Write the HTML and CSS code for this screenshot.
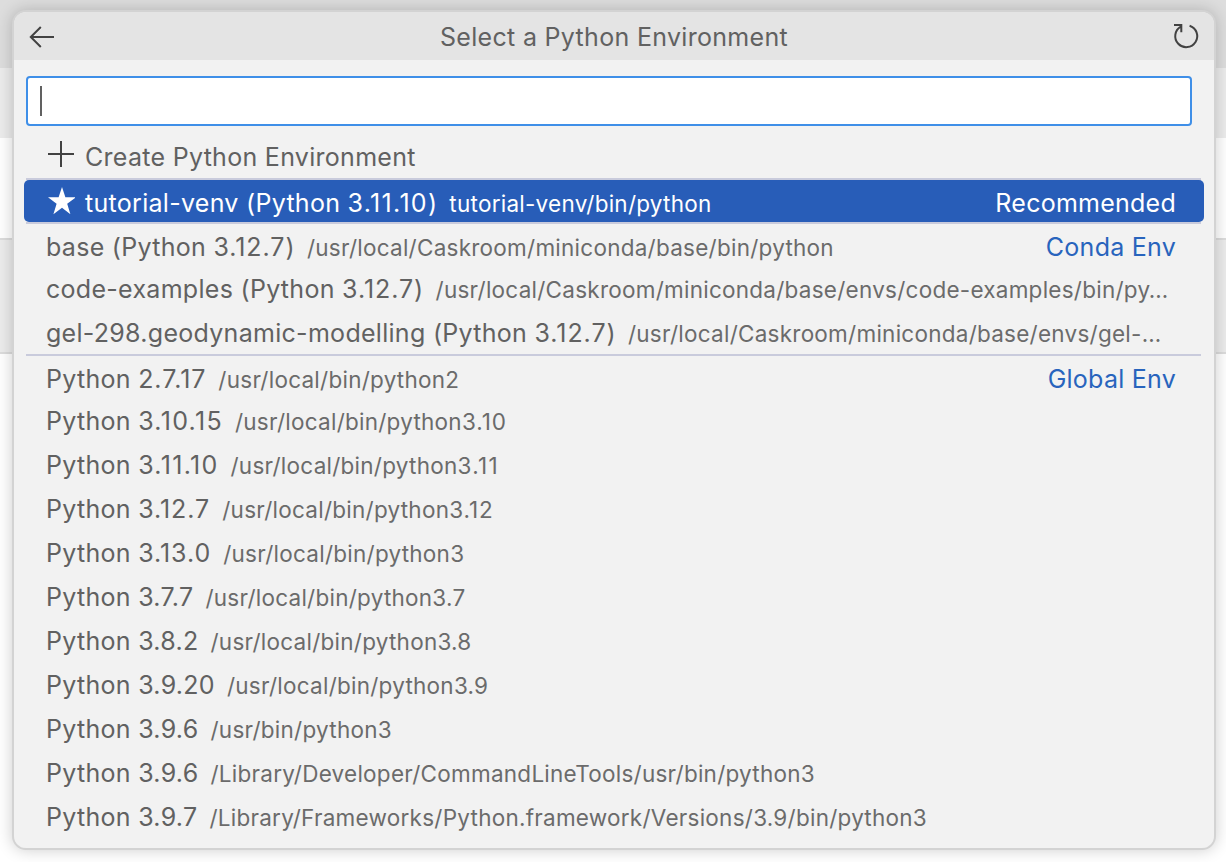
FILE: index.html
```html
<!DOCTYPE html>
<html lang="en">
<head>
<meta charset="utf-8">
<title>Select a Python Environment</title>
<link rel="stylesheet" href="styles.css">
</head>
<body>
<div class="backdrop">
  <div class="band band-title"></div>
  <div class="band band-tabs"></div>
  <div class="band band-editor"></div>
  <div class="band band-cell"></div>
</div>
<main class="quick-pick">
  <header class="titlebar">
    <svg class="icon back" viewBox="0 0 28 26"><path d="M26 13H3M12.8 3 2.8 13l10 10" /></svg>
    <h1 class="title">Select a Python Environment</h1>
    <svg class="icon refresh" viewBox="0 0 28 28"><path d="M17.6 2.7A11 11 0 1 1 8.8 3.6M2 2h7.3v7.2" /></svg>
  </header>
  <div class="input"><span class="caret"></span></div>
  <ul class="list">
    <li class="row"><svg class="icon lead" viewBox="0 0 28 28"><path d="M14 1v26M1 14h26" /></svg><span class="label create">Create Python Environment</span></li>
    <li class="row group selected"><svg class="icon lead star" viewBox="0 0 28 28"><path d="M15 0l3.4 10.3H28.8l-8.6 6.5 3.2 10.4L15 20.8l-8.6 6.4 3.2-10.4L1 10.3h10.6z" /></svg><span class="label">tutorial-venv (Python <span class="wider">3.11.10</span>)</span><span class="path">tutorial-venv/bin/python</span><span class="tag">Recommended</span></li>
    <li class="row group"><span class="label">base (Python <span class="wide">3.12.7</span>)</span><span class="path">/usr/local/Caskroom/miniconda/base/bin/python</span><span class="tag">Conda Env</span></li>
    <li class="row"><span class="label">code-examples (Python <span class="wide">3.12.7</span>)</span><span class="path">/usr/local/Caskroom/miniconda/base/envs/code-examples/bin/py…</span></li>
    <li class="row"><span class="label">gel-298.geodynamic-modelling (Python <span class="wide">3.12.7</span>)</span><span class="path">/usr/local/Caskroom/miniconda/base/envs/gel-…</span></li>
    <li class="row group"><span class="label">Python <span class="wide">2.7.17</span></span><span class="path">/usr/local/bin/python2</span><span class="tag">Global Env</span></li>
    <li class="row"><span class="label">Python <span class="wider">3.10.15</span></span><span class="path">/usr/local/bin/python<span class="wide">3.10</span></span></li>
    <li class="row"><span class="label">Python <span class="wider">3.11.10</span></span><span class="path">/usr/local/bin/python<span class="wider">3.11</span></span></li>
    <li class="row"><span class="label">Python <span class="wide">3.12.7</span></span><span class="path">/usr/local/bin/python<span class="wide">3.12</span></span></li>
    <li class="row"><span class="label">Python <span class="wide">3.13.0</span></span><span class="path">/usr/local/bin/python3</span></li>
    <li class="row"><span class="label">Python 3.7.7</span><span class="path">/usr/local/bin/python3.7</span></li>
    <li class="row"><span class="label">Python 3.8.2</span><span class="path">/usr/local/bin/python3.8</span></li>
    <li class="row"><span class="label">Python 3.9.20</span><span class="path">/usr/local/bin/python3.9</span></li>
    <li class="row"><span class="label">Python 3.9.6</span><span class="path">/usr/bin/python3</span></li>
    <li class="row"><span class="label">Python 3.9.6</span><span class="path">/Library/Developer/CommandLineTools/usr/bin/python3</span></li>
    <li class="row"><span class="label">Python 3.9.7</span><span class="path">/Library/Frameworks/Python.framework/Versions/3.9/bin/python3</span></li>
  </ul>
</main>
</body>
</html>
```

FILE: styles.css
```css
* { box-sizing: border-box; }
body {
  margin: 0;
  height: 862px;
  padding: 10px 10px 12px 12px;
  overflow: hidden;
  background: #fff;
  color: #616161;
  font-family: Inter, "Liberation Sans", sans-serif;
  font-size: 25px;
}
.backdrop { position: absolute; inset: 0; z-index: -1; }
.band-title { height: 68px; background: #dddddd; }
.band-tabs { height: 70px; background: #ececec; }
.band-editor { height: 100px; background: #fff; }
.band-cell { height: 116px; background: #ececec; border: solid #dcdcdc; border-width: 2px 0; }
.quick-pick {
  width: 1204px;
  height: 840px;
  border: 2px solid #d3d3d3;
  border-radius: 14px;
  background: #f2f2f2;
  background-clip: padding-box;
  box-shadow: 0 0 16px rgba(0, 0, 0, .2);
  overflow: hidden;
}
.titlebar {
  display: flex;
  align-items: center;
  justify-content: space-between;
  height: 48px;
  padding: 2px 14px 0 14px;
  background: #e4e4e4;
}
.title { margin: 0; font-size: 25px; font-weight: 400; letter-spacing: .31px; }
.icon { flex: none; fill: none; stroke: #424242; stroke-width: 2; }
.back { width: 28px; height: 26px; }
.refresh { width: 28px; height: 28px; }
.input {
  display: flex;
  align-items: center;
  width: 1166px;
  height: 50px;
  margin: 16px 0 8px 12px;
  padding-left: 12px;
  border: 2px solid #3f8fe8;
  border-radius: 4px;
  background: #fff;
}
.caret { width: 2px; height: 30px; background: #616161; }
.list { margin: 0 10px; padding: 0; list-style: none; }
.row {
  position: relative;
  display: flex;
  align-items: baseline;
  height: 44px;
  padding: 0 28px 0 22px;
  line-height: 46px;
  white-space: nowrap;
}
.group { line-height: 50px; }
.group::before {
  content: "";
  position: absolute;
  top: 0;
  left: 2px;
  right: 3px;
  height: 2px;
  background: #c9cbdc;
}
.selected { color: #fff; }
.selected::after {
  content: "";
  position: absolute;
  z-index: -1;
  inset: 2px 0 0;
  border-radius: 5px;
  background: #285db8;
}
.quick-pick, .selected { isolation: isolate; }
.lead { align-self: flex-start; width: 28px; height: 28px; margin: 6px 10px 0 1px; }
.star { margin-top: 9px; fill: #fff; stroke: none; }
.label { letter-spacing: .29px; }
.path { margin-left: 12px; font-size: 22.5px; letter-spacing: .25px; color: #6b6b6b; }
.wide { letter-spacing: .95px; }
.wider { letter-spacing: 1.3px; }
.tag { margin-left: auto; letter-spacing: .25px; color: #2864bd; }
.selected .path, .selected .tag { color: #fff; }
```
